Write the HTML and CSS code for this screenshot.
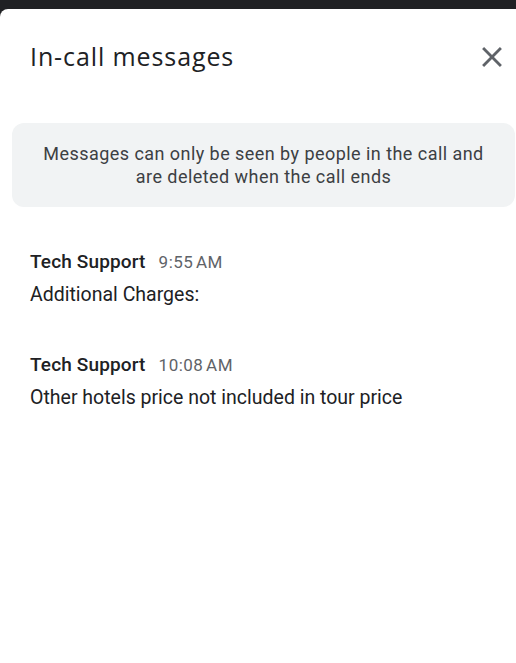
FILE: index.html
```html
<!DOCTYPE html>
<html>
<head>
<meta charset="utf-8">
<link rel="stylesheet" href="styles.css">
</head>
<body>
<div class="topbar"></div>
<div class="panel">
  <header class="header">
    <h1 class="title">In-call messages</h1>
    <button class="close" aria-label="Close">
      <svg width="24" height="24" viewBox="0 0 24 24"><path d="M19 6.41 17.59 5 12 10.59 6.41 5 5 6.41 10.59 12 5 17.59 6.41 19 12 13.41 17.59 19 19 17.59 13.41 12z" fill="#5f6368"/></svg>
    </button>
  </header>
  <div class="notice">Messages can only be seen by people in the call and are deleted when the call ends</div>
  <div class="messages">
    <div class="msg">
      <div class="meta"><span class="sender">Tech Support</span><span class="time">9:55&#8239;AM</span></div>
      <div class="text">Additional Charges:</div>
    </div>
    <div class="msg">
      <div class="meta"><span class="sender">Tech Support</span><span class="time">10:08&#8239;AM</span></div>
      <div class="text">Other hotels price not included in tour price</div>
    </div>
  </div>
</div>
</body>
</html>
```
FILE: styles.css
```css
html, body {
  margin: 0;
  padding: 0;
  background: #202124;
  height: 100%;
}
body {
  display: flex;
  flex-direction: column;
  font-family: Roboto, "Liberation Sans", sans-serif;
}
.topbar {
  height: 9px;
  flex: none;
}
.panel {
  flex: 1;
  background: #fff;
  border-top-left-radius: 8px;
  display: flex;
  flex-direction: column;
}
.header {
  display: flex;
  align-items: center;
  justify-content: space-between;
  height: 96px;
  padding: 0 6px 0 30px;
}
.title {
  margin: 0;
  font-family: "Open Sans", Roboto, sans-serif;
  font-weight: 400;
  font-size: 25px;
  color: #202124;
  letter-spacing: 0.9px;
  position: relative;
  top: -1px;
}
.close {
  border: 0;
  background: none;
  padding: 0;
  width: 36px;
  height: 36px;
  display: flex;
  align-items: center;
  justify-content: center;
}
.close svg {
  width: 34px;
  height: 34px;
  flex: none;
}
.notice {
  margin: 18px 1px 0 12px;
  background: #f1f3f4;
  border-radius: 12px;
  padding: 19px 20px;
  text-align: center;
  font-size: 18px;
  line-height: 23px;
  letter-spacing: 0.45px;
  color: #3c4043;
}
.messages {
  padding: 43px 30px 0;
  display: flex;
  flex-direction: column;
  gap: 47px;
}
.meta {
  display: flex;
  align-items: baseline;
  gap: 13px;
}
.sender {
  font-size: 19px;
  font-weight: 500;
  letter-spacing: 0.15px;
  color: #202124;
}
.time {
  font-size: 17px;
  letter-spacing: 0.5px;
  color: #5f6368;
}
.text {
  margin-top: 10px;
  font-size: 19.5px;
  color: #202124;
}
```
